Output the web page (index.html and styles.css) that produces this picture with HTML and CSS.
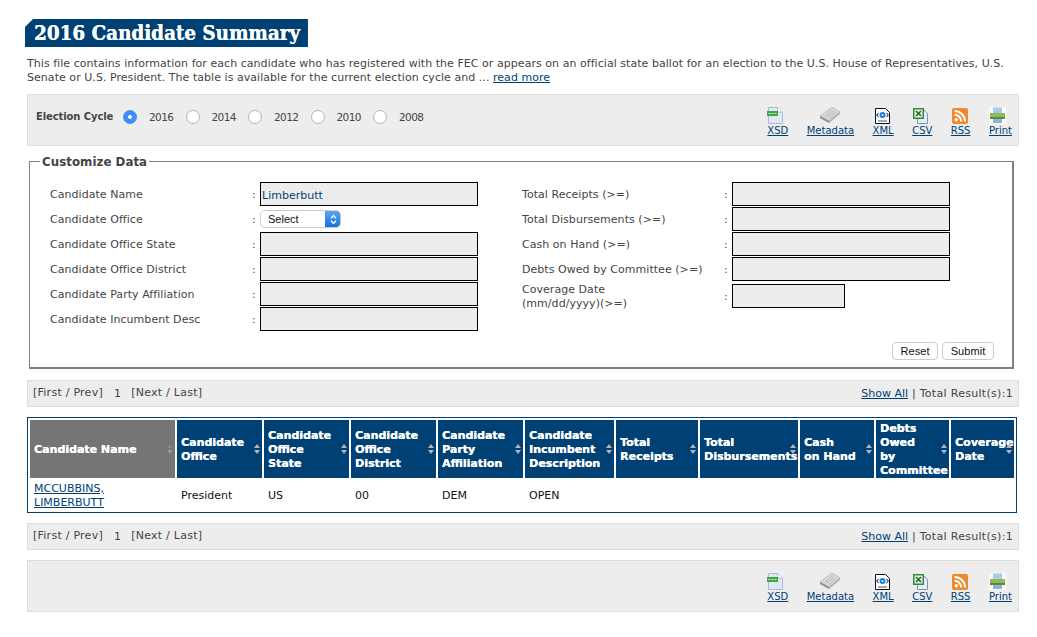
FILE: index.html
```html
<!DOCTYPE html>
<html lang="en">
<head>
    <meta charset="UTF-8">
    <meta name="viewport" content="width=device-width, initial-scale=1.0">
    <title>2016 Candidate Summary</title>
    <link rel="stylesheet" href="styles.css">
</head>
<body>
    <svg class="icon-defs" width="0" height="0" aria-hidden="true">
        <symbol id="i-xsd" viewBox="0 0 16 17">
            <path d="M1.500.5h9l5 4.500v11.500h-14z" fill="#dfe9f5" stroke="#a9bcd3"/>
            <path d="M10.500.5v4.500h5" fill="#fff" stroke="#a9bcd3"/>
            <rect x="0" y="4" width="11" height="5" fill="#3fa648"/>
            <path d="M1.500 6.500h2M4.500 6.500h2M7.500 6.500h2" stroke="#d8f0d8"/>
        </symbol>
        <symbol id="i-meta" viewBox="0 0 20 16">
            <path d="M0 9L12 0l8 5-11 9z" fill="#d8d8d8" stroke="#aaa" stroke-width=".6"/>
            <path d="M0 9l9 5v2L0 11z" fill="#8c8c8c"/>
            <path d="M9 14L20 5v2L9 16z" fill="#b0b0b0"/>
            <path d="M5 9l7-6M7 10l7-6M9 11.500l7-6" stroke="#b4b4b4" stroke-width=".8"/>
        </symbol>
        <symbol id="i-xml" viewBox="0 0 15 16">
            <path d="M.5.5h10l4 4v11H.5z" fill="#fff" stroke="#111"/>
            <circle cx="7.500" cy="7" r="3" fill="#1f7fd6"/>
            <circle cx="7.500" cy="7" r="1.100" fill="#cfe8ff"/>
            <path d="M3.500 5L1.800 7l1.700 2M11.500 5l1.700 2-1.700 2" fill="none" stroke="#123f8a" stroke-width="1.100"/>
            <path d="M3 13h9" stroke="#555"/>
        </symbol>
        <symbol id="i-csv" viewBox="0 0 15 16">
            <path d="M4.500 1.500h6l4 4v10h-10z" fill="#e3ecf7" stroke="#7f93ad"/>
            <rect x="0" y="0" width="11" height="11" fill="#2f8a3a"/>
            <rect x="1.500" y="1.500" width="8" height="8" fill="#eef6ea"/>
            <path d="M3 3l5 5M8 3L3 8" stroke="#1d6e2a" stroke-width="1.700"/>
        </symbol>
        <symbol id="i-rss" viewBox="0 0 16 16">
            <rect width="16" height="16" rx="2" fill="#ee8a2c"/>
            <circle cx="4.300" cy="11.700" r="1.700" fill="#fff"/>
            <path d="M2.600 6.800a6.600 6.600 0 0 1 6.600 6.600M2.600 3a10.400 10.400 0 0 1 10.400 10.400" fill="none" stroke="#fff" stroke-width="2"/>
        </symbol>
        <symbol id="i-print" viewBox="0 0 17 17">
            <rect width="17" height="17" fill="#fafafa"/>
            <rect x="4" y="0.500" width="9" height="6" fill="#a9cbe6"/>
            <rect x="1" y="6" width="15" height="6" fill="#8dbb5c"/>
            <rect x="1" y="10" width="15" height="2" fill="#5d8a3a"/>
            <rect x="4" y="12" width="9" height="4" fill="#8db4d6"/>
        </symbol>
        <symbol id="i-chev" viewBox="0 0 7 11">
            <path d="M1 4.200l2.500-2.700L6 4.200M1 6.800l2.500 2.700L6 6.800" fill="none" stroke="#fff" stroke-width="1.300"/>
        </symbol>
    </svg>

    <main class="page">
        <h1 class="page-title">2016 Candidate Summary</h1>
        <p class="intro">This file contains information for each candidate who has registered with the FEC or appears on an official state ballot for an election to the U.S. House of Representatives, U.S. Senate or U.S. President. The table is available for the current election cycle and ... <a href="#">read more</a></p>

        <section class="bar top-bar">
            <div class="cycle">
                <span class="cycle-label">Election Cycle</span>
                <label class="cycle-opt"><input type="radio" name="cycle" checked>2016</label>
                <label class="cycle-opt"><input type="radio" name="cycle">2014</label>
                <label class="cycle-opt"><input type="radio" name="cycle">2012</label>
                <label class="cycle-opt"><input type="radio" name="cycle">2010</label>
                <label class="cycle-opt"><input type="radio" name="cycle">2008</label>
            </div>
            <div class="exports">
                <a href="#" class="export export-xsd"><svg width="16" height="17"><use href="#i-xsd"/></svg>XSD</a>
                <a href="#" class="export export-meta"><svg width="20" height="16"><use href="#i-meta"/></svg>Metadata</a>
                <a href="#" class="export export-xml"><svg width="15" height="16"><use href="#i-xml"/></svg>XML</a>
                <a href="#" class="export export-csv"><svg width="15" height="16"><use href="#i-csv"/></svg>CSV</a>
                <a href="#" class="export export-rss"><svg width="16" height="16"><use href="#i-rss"/></svg>RSS</a>
                <a href="#" class="export export-print"><svg width="17" height="17"><use href="#i-print"/></svg>Print</a>
            </div>
        </section>

        <fieldset class="customize">
            <legend>Customize Data</legend>
            <div class="form-cols">
                <div class="form-col">
                    <div class="form-row"><label>Candidate Name</label><span class="colon">:</span><input type="text" class="field" value="Limberbutt"></div>
                    <div class="form-row"><label>Candidate Office</label><span class="colon">:</span>
                        <span class="select-wrap">
                            <select class="select"><option>Select</option></select>
                            <svg class="select-chev" width="7" height="11"><use href="#i-chev"/></svg>
                        </span>
                    </div>
                    <div class="form-row"><label>Candidate Office State</label><span class="colon">:</span><input type="text" class="field"></div>
                    <div class="form-row"><label>Candidate Office District</label><span class="colon">:</span><input type="text" class="field"></div>
                    <div class="form-row"><label>Candidate Party Affiliation</label><span class="colon">:</span><input type="text" class="field"></div>
                    <div class="form-row"><label>Candidate Incumbent Desc</label><span class="colon">:</span><input type="text" class="field"></div>
                </div>
                <div class="form-col">
                    <div class="form-row"><label>Total Receipts (&gt;=)</label><span class="colon">:</span><input type="text" class="field"></div>
                    <div class="form-row"><label>Total Disbursements (&gt;=)</label><span class="colon">:</span><input type="text" class="field"></div>
                    <div class="form-row"><label>Cash on Hand (&gt;=)</label><span class="colon">:</span><input type="text" class="field"></div>
                    <div class="form-row"><label>Debts Owed by Committee (&gt;=)</label><span class="colon">:</span><input type="text" class="field"></div>
                    <div class="form-row form-row-date"><label>Coverage Date<br>(mm/dd/yyyy)(&gt;=)</label><span class="colon">:</span><input type="text" class="field field-date"></div>
                </div>
            </div>
            <div class="form-actions">
                <button type="button" class="btn">Reset</button>
                <button type="button" class="btn">Submit</button>
            </div>
        </fieldset>

        <nav class="bar pager">
            <div class="pager-left"><span>[First / Prev]</span><span class="pager-num">1</span><span>[Next / Last]</span></div>
            <div><a href="#">Show All</a> | Total Result(s):1</div>
        </nav>

        <table class="results">
            <colgroup>
                <col class="c-name"><col class="c-85"><col class="c-85"><col class="c-85"><col class="c-85">
                <col class="c-inc"><col class="c-rec"><col class="c-dis"><col class="c-cash"><col class="c-debt"><col class="c-cov">
            </colgroup>
            <thead>
                <tr>
                    <th class="sorted">Candidate Name<span class="sort"></span></th>
                    <th>Candidate<br>Office<span class="sort"></span></th>
                    <th>Candidate<br>Office<br>State<span class="sort"></span></th>
                    <th>Candidate<br>Office<br>District<span class="sort"></span></th>
                    <th>Candidate<br>Party<br>Affiliation<span class="sort"></span></th>
                    <th>Candidate<br>Incumbent<br>Description<span class="sort"></span></th>
                    <th>Total<br>Receipts<span class="sort"></span></th>
                    <th>Total<br>Disbursements<span class="sort"></span></th>
                    <th>Cash<br>on Hand<span class="sort"></span></th>
                    <th>Debts<br>Owed<br>by<br>Committee<span class="sort"></span></th>
                    <th>Coverage<br>Date<span class="sort"></span></th>
                </tr>
            </thead>
            <tbody>
                <tr>
                    <td><a href="#">MCCUBBINS, LIMBERBUTT</a></td>
                    <td>President</td>
                    <td>US</td>
                    <td>00</td>
                    <td>DEM</td>
                    <td>OPEN</td>
                    <td></td>
                    <td></td>
                    <td></td>
                    <td></td>
                    <td></td>
                </tr>
            </tbody>
        </table>

        <nav class="bar pager">
            <div class="pager-left"><span>[First / Prev]</span><span class="pager-num">1</span><span>[Next / Last]</span></div>
            <div><a href="#">Show All</a> | Total Result(s):1</div>
        </nav>

        <section class="bar bottom-bar">
            <div class="exports">
                <a href="#" class="export export-xsd"><svg width="16" height="17"><use href="#i-xsd"/></svg>XSD</a>
                <a href="#" class="export export-meta"><svg width="20" height="16"><use href="#i-meta"/></svg>Metadata</a>
                <a href="#" class="export export-xml"><svg width="15" height="16"><use href="#i-xml"/></svg>XML</a>
                <a href="#" class="export export-csv"><svg width="15" height="16"><use href="#i-csv"/></svg>CSV</a>
                <a href="#" class="export export-rss"><svg width="16" height="16"><use href="#i-rss"/></svg>RSS</a>
                <a href="#" class="export export-print"><svg width="17" height="17"><use href="#i-print"/></svg>Print</a>
            </div>
        </section>
    </main>
</body>
</html>
```

FILE: styles.css
```css
* {
    box-sizing: border-box;
}

body {
    margin: 0;
    background: #fff;
    color: #444;
    font-family: "DejaVu Sans", Verdana, sans-serif;
    font-size: 11px;
    line-height: 14px;
    letter-spacing: .045px;
}

a {
    color: #004175;
}

.icon-defs {
    position: absolute;
}

.page {
    width: 992px;
    margin-left: 27px;
    padding-top: 19px;
}

.page-title {
    display: inline-block;
    height: 28px;
    margin: 0 0 0 -2px;
    padding: 0 8px 0 9px;
    background: #004175;
    color: #fff;
    font-family: "DejaVu Serif", Georgia, serif;
    font-size: 20.400px;
    font-stretch: condensed;
    font-weight: bold;
    line-height: 28px;
    letter-spacing: 0;
    text-shadow: .3px 0 0 #fff;
    clip-path: polygon(8px 0, 100% 0, 100% 100%, 0 100%, 0 8px);
}

.intro {
    margin: 10px 0 9px;
}

.bar {
    display: flex;
    justify-content: space-between;
    background: #ededed;
    border: 1px solid #ddd;
}

.top-bar,
.bottom-bar {
    height: 52px;
}

.bottom-bar {
    justify-content: flex-end;
    margin-top: 10px;
}

.cycle {
    display: flex;
    align-items: center;
    height: 43px;
    padding-left: 8px;
    font-size: 10.500px;
    letter-spacing: -.6px;
}

.cycle-label {
    width: 87px;
    font-size: 10px;
    font-weight: bold;
    letter-spacing: -.1px;
}

.cycle-opt {
    display: flex;
    align-items: center;
    width: 62.500px;
}

.cycle-opt input {
    appearance: none;
    width: 14px;
    height: 14px;
    margin: 0 12px 0 0;
    background: #fff;
    border: 1px solid #b5b5b5;
    border-radius: 50%;
}

.cycle-opt input:checked {
    background: radial-gradient(circle, #fff 0 1.500px, #3d8ff5 2.200px);
    border-color: #3d8ff5;
}

.exports {
    display: flex;
    align-items: flex-end;
    gap: 18.500px;
    height: 43px;
    padding-right: 6px;
    font-size: 10px;
    letter-spacing: 0;
}

.export {
    display: flex;
    flex-direction: column;
    line-height: 14px;
}

.export svg {
    display: block;
}

.export-meta {
    align-items: center;
}

.export-meta svg {
    margin-bottom: 1px;
}

.export-xml svg {
    margin-left: 2px;
}

.export-csv svg {
    margin-left: 1px;
}

.export-rss svg {
    margin-left: 1px;
}

.customize {
    height: 216px;
    margin: 7px 5px 11px 2px;
    padding: 12px 18px 0 20px;
    border: 2px solid #808080;
    border-width: 1px 2px 2px 1px;
}

.customize legend {
    margin-left: -10px;
    padding: 2px 2px 0;
    color: #444;
    font-size: 11.800px;
    font-weight: bold;
}

.form-cols {
    display: grid;
    grid-template-columns: 472px 1fr;
}

.form-row {
    display: grid;
    grid-template-columns: 202px 8px auto;
    align-items: center;
    height: 25px;
}

.form-row label {
    display: block;
    padding-top: 2px;
}

.form-row .colon {
    padding-top: 2px;
}

.form-row-date {
    height: 28px;
}

.field {
    width: 218px;
    height: 24px;
    padding: 3px 1px 0;
    background: #ededed;
    border: 1px solid #000;
    color: #004175;
    font: 11px "DejaVu Sans", Verdana, sans-serif;
    outline: none;
}

.field-date {
    width: 113px;
}

.select-wrap {
    position: relative;
    display: block;
    width: 81px;
    height: 18px;
}

.select {
    appearance: none;
    display: block;
    width: 81px;
    height: 18px;
    padding: 0 0 0 7px;
    background: linear-gradient(#5aa5f7, #1a6fe0) right / 15px 100% no-repeat, #fff;
    border: 1px solid #ccc;
    border-radius: 5px;
    color: #111;
    font: 11px "Liberation Sans", Arial, sans-serif;
}

.select-chev {
    position: absolute;
    top: 4px;
    right: 4px;
}

.form-actions {
    display: flex;
    justify-content: flex-end;
    gap: 4px;
    margin-top: 11px;
}

.btn {
    height: 18px;
    padding: 0 7.500px;
    background: #fff;
    border: 1px solid #ccc;
    border-radius: 4px;
    color: #111;
    font: 11px "Liberation Sans", Arial, sans-serif;
    letter-spacing: .1px;
}

.pager {
    align-items: center;
    height: 27px;
    padding: 0 5px;
    letter-spacing: .3px;
}

.pager a {
    letter-spacing: 0;
}

.pager-left {
    display: flex;
    letter-spacing: .25px;
}

.pager-num {
    margin: 1px 10px 0 11px;
}

.results {
    width: 990px;
    margin: 10px 0;
    border: 1px solid #004175;
    border-spacing: 2px;
    table-layout: fixed;
    letter-spacing: 0;
}

.c-name { width: 145px; }
.c-85 { width: 85px; }
.c-inc { width: 89px; }
.c-rec { width: 82px; }
.c-dis { width: 98px; }
.c-cash { width: 74px; }
.c-debt { width: 73px; }
.c-cov { width: 63px; }

.results th {
    position: relative;
    height: 58px;
    padding: 1px 0 0 4px;
    background: #004175;
    color: #fff;
    font-size: 11px;
    font-weight: bold;
    line-height: 14px;
    text-align: left;
    text-shadow: .3px 0 0 #fff;
    white-space: nowrap;
}

.results th.sorted {
    background: #757575;
}

.sort {
    position: absolute;
    top: 50%;
    right: 1px;
    width: 7px;
    height: 10px;
    margin-top: -5px;
}

.sort::before,
.sort::after {
    content: "";
    position: absolute;
    left: 0;
    border-left: 3.500px solid transparent;
    border-right: 3.500px solid transparent;
}

.sort::before {
    top: 0;
    border-bottom: 4px solid #b5b5b5;
}

.sort::after {
    bottom: 0;
    border-top: 4px solid #b5b5b5;
}

.sorted .sort::before {
    border-bottom-color: #8b8b70;
}

.sorted .sort::after {
    border-top-color: #9a9a9a;
}

.results td {
    height: 30px;
    padding: 1px 0 0 4px;
    color: #111;
    vertical-align: middle;
}
```
